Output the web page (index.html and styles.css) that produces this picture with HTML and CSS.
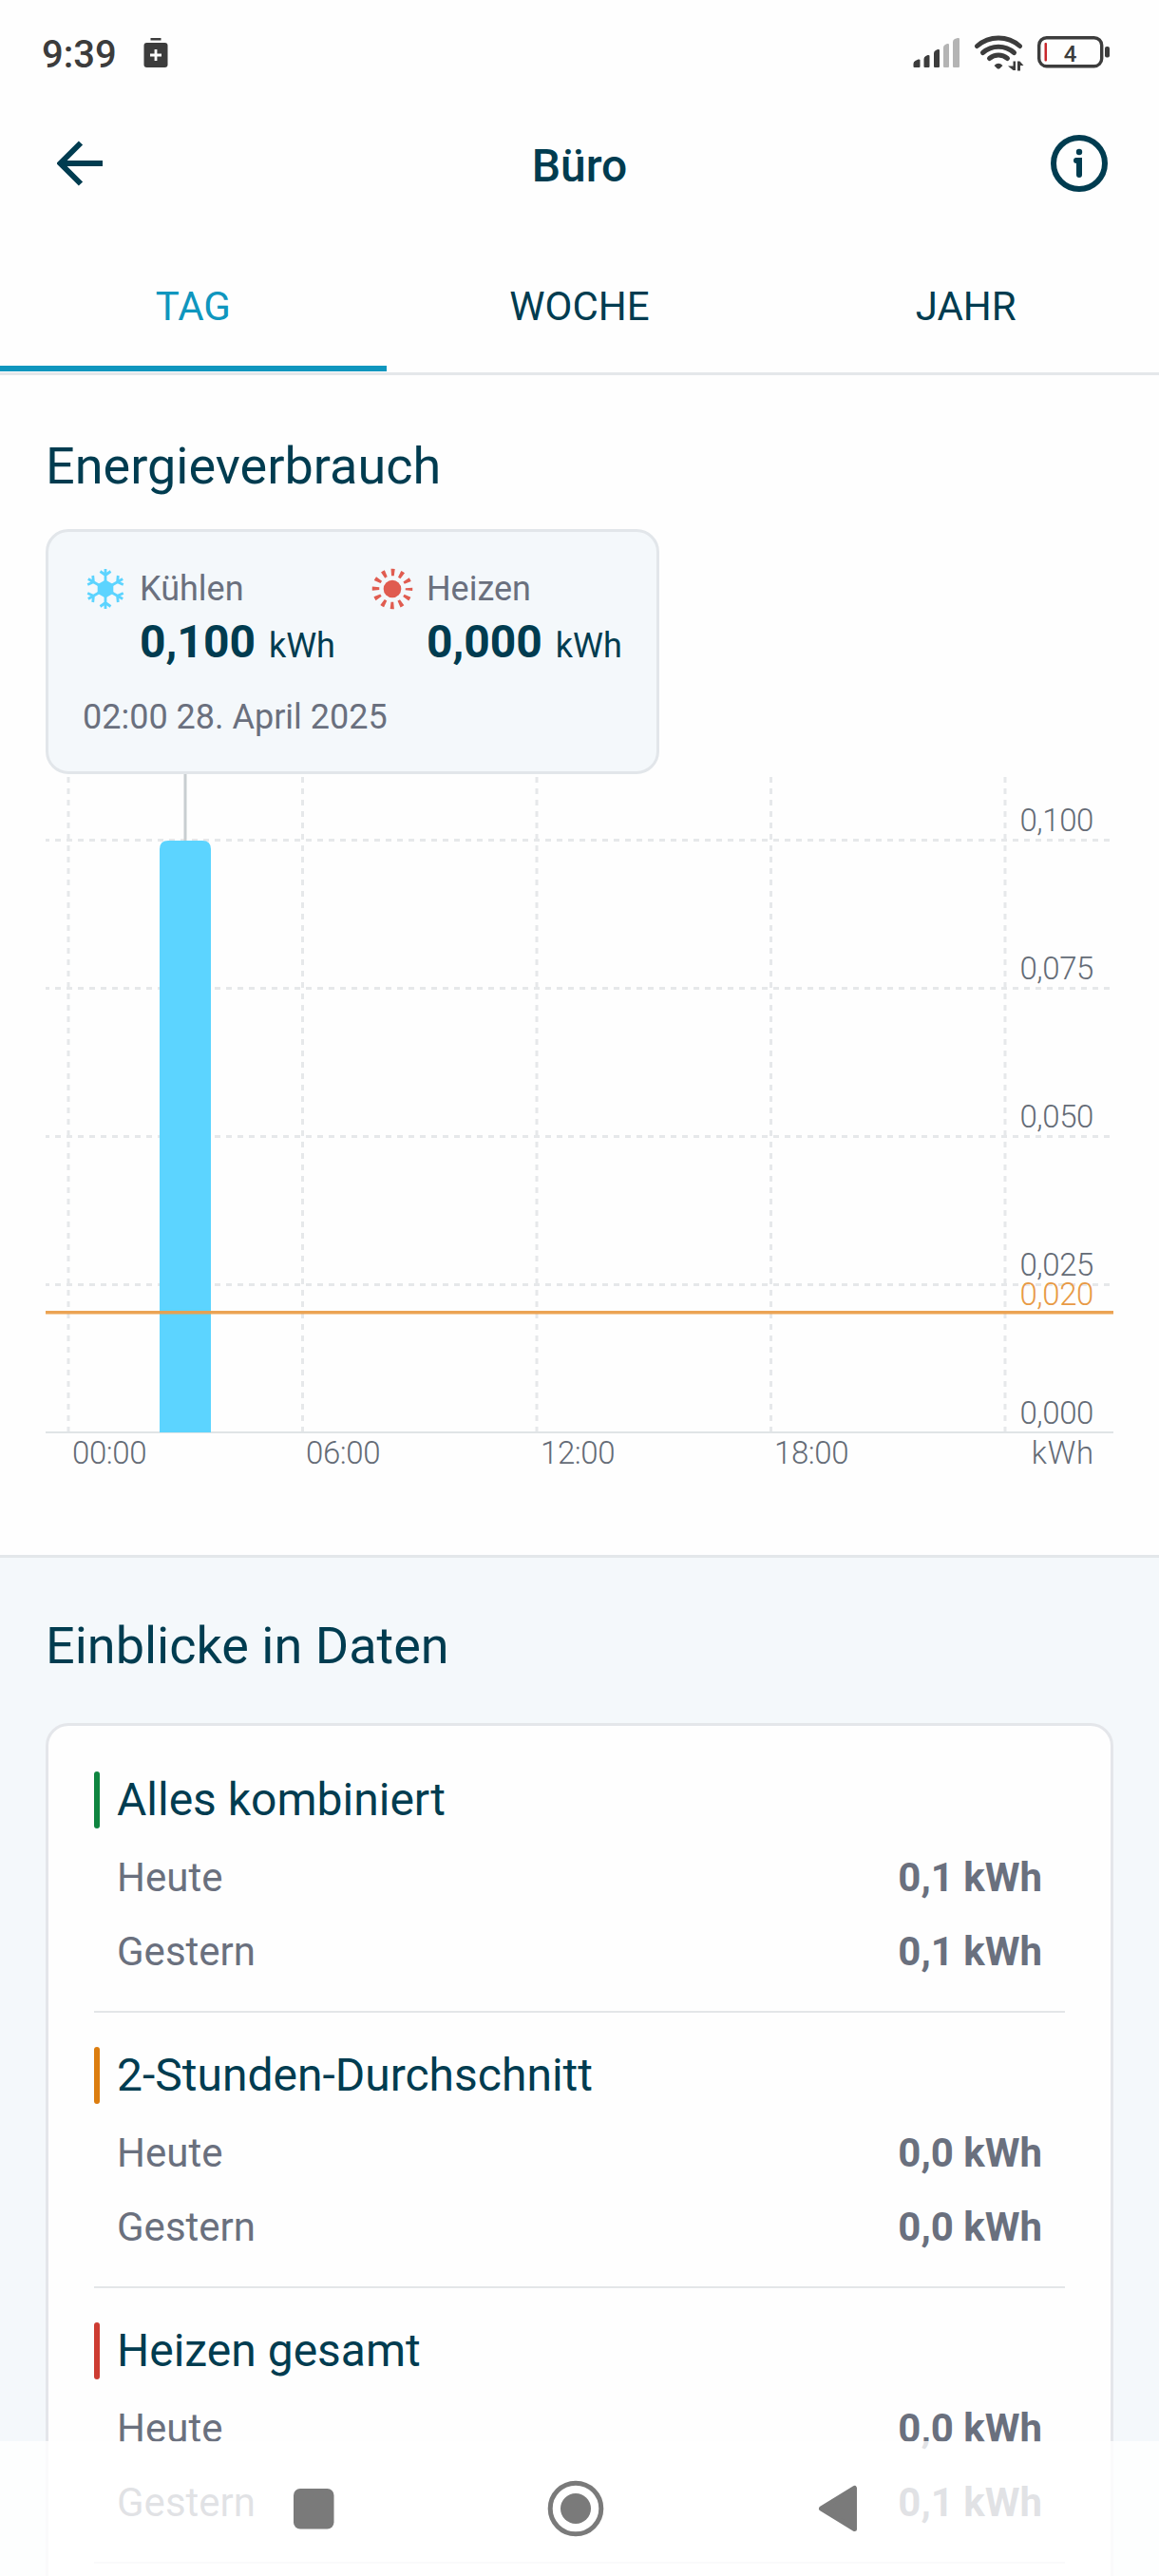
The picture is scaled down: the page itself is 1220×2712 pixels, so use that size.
FILE: index.html
```html
<!DOCTYPE html>
<html lang="de">
  <head>
    <meta charset="UTF-8" />
    <meta name="viewport" content="width=device-width, initial-scale=1.0" />
    <title>Büro - Energieverbrauch</title>
    <link rel="stylesheet" href="styles.css">
  </head>
  <body>
    <!-- Status Bar -->
    <div class="status-bar">
      <div class="status-left">
        <span class="clock">9:39</span>
        <svg class="saver-icon" width="26" height="32" viewBox="0 0 26 32">
          <rect x="7.500" y="0" width="11" height="2.500" fill="#3c3c3c"/>
          <rect x="0.500" y="5" width="25" height="26" rx="3" fill="#3c3c3c"/>
          <path d="M13 12v12M7 18h12" stroke="#fefefe" stroke-width="2.800"/>
        </svg>
      </div>
      <div class="status-right">
        <svg width="50" height="40" viewBox="0 0 50 40">
          <g fill="#3c3c3c">
            <path d="M0.500 35v-3q0-2 2-3l3-1.500q2-.5 2 1V35q0 1-1 1h-5q-1 0-1-1z"/>
            <path d="M11.500 35v-8q0-2 2-3l2-1q2-.5 2 1V35q0 1-1 1h-4q-1 0-1-1z"/>
            <path d="M22 35V21q0-2 2-3l2-1q2-.5 2 1V35q0 1-1 1h-4q-1 0-1-1z"/>
          </g>
          <g fill="#b4b4b4">
            <path d="M32 35V15q0-2 2-3l2-1q2-.5 2 1V35q0 1-1 1h-4q-1 0-1-1z"/>
            <path d="M42 35V9q0-2 2-3l3-1q2-.5 2 1V35q0 1-1 1h-5q-1 0-1-1z"/>
          </g>
        </svg>
        <svg width="54" height="40" viewBox="0 0 54 40">
          <g fill="none" stroke="#3c3c3c" stroke-width="5" stroke-linecap="round">
            <path d="M3.500 13.500a34 34 0 0 1 45 0"/>
            <path d="M9.500 20.500a25 25 0 0 1 33 0"/>
            <path d="M16.500 26.500a15 15 0 0 1 19 0"/>
          </g>
          <path d="M21.500 34q4.500-4.500 9 0l-3 3q-1.500 1.200-3 0z" fill="#3c3c3c"/>
          <path d="M41.500 29.500h2.500v9.500h-2.500l-5.500-4.500h5.500zM46 39.500v-10h2.500l4 4.500h-3.500v5.500z" fill="#3c3c3c"/>
        </svg>
        <svg width="77" height="34" viewBox="0 0 77 34">
          <rect x="1.700" y="1.700" width="66" height="30" rx="8" fill="none" stroke="#3c3c3c" stroke-width="3.400"/>
          <rect x="71" y="11" width="5" height="11.500" rx="2" fill="#3c3c3c"/>
          <rect x="7.500" y="7" width="2.500" height="19.500" rx="1" fill="#c8282d"/>
          <text x="34.500" y="26.500" text-anchor="middle" class="battery-level">4</text>
        </svg>
      </div>
    </div>

    <!-- Header -->
    <div class="header">
      <svg class="back-icon" width="48" height="48" viewBox="0 0 48 48">
        <path d="M25 2.500L3.500 24L25 45.500M4 24H48" fill="none" stroke="#003c50" stroke-width="6"/>
      </svg>
      <h1>Büro</h1>
      <svg class="info-icon" width="60" height="60" viewBox="0 0 60 60">
        <circle cx="30" cy="30" r="27" fill="none" stroke="#003c50" stroke-width="6"/>
        <circle cx="30" cy="18" r="3.200" fill="#003c50"/>
        <path d="M27 27h3v15" fill="none" stroke="#003c50" stroke-width="6" stroke-linecap="round"/>
        <path d="M26 24h7v4h-7z" fill="#003c50"/>
      </svg>
    </div>

    <!-- Tabs -->
    <div class="tabs">
      <a href="#" class="tab active">TAG</a>
      <a href="#" class="tab">WOCHE</a>
      <a href="#" class="tab">JAHR</a>
    </div>

    <!-- Energy Chart -->
    <div class="usage">
      <h2>Energieverbrauch</h2>

      <div class="chart-info">
        <div class="info-values">
          <div class="info-item">
            <svg width="48" height="48" viewBox="0 0 48 48">
              <defs>
                <g id="flake-arm">
                  <path d="M24 24V3M18.500 5.500L24 9.500L29.500 5.500"/>
                </g>
              </defs>
              <g fill="none" stroke="#5cd4ff" stroke-width="2.800">
                <use href="#flake-arm"/>
                <use href="#flake-arm" transform="rotate(60 24 24)"/>
                <use href="#flake-arm" transform="rotate(120 24 24)"/>
                <use href="#flake-arm" transform="rotate(180 24 24)"/>
                <use href="#flake-arm" transform="rotate(240 24 24)"/>
                <use href="#flake-arm" transform="rotate(300 24 24)"/>
              </g>
              <path d="M24 14.500l8.300 4.700v9.600L24 33.500l-8.300-4.700v-9.600z" fill="#5cd4ff"/>
            </svg>
            <div>
              <div class="info-label">Kühlen</div>
              <div class="info-value">0,100 <span>kWh</span></div>
            </div>
          </div>
          <div class="info-item">
            <svg width="48" height="48" viewBox="0 0 48 48">
              <circle cx="24" cy="24" r="9.300" fill="#e05c50"/>
              <circle cx="24" cy="24" r="17.500" fill="none" stroke="#e05c50" stroke-width="7.500" stroke-dasharray="3.600 5.563" stroke-dashoffset="1.800"/>
            </svg>
            <div>
              <div class="info-label">Heizen</div>
              <div class="info-value">0,000 <span>kWh</span></div>
            </div>
          </div>
        </div>
        <div class="info-date">02:00 28. April 2025</div>
      </div>

      <svg class="chart" width="1124" height="760" viewBox="0 0 1124 760">
        <g class="grid">
          <path d="M24 3V693M270.500 3V693M517 3V693M763.500 3V693M1010 3V693"/>
          <path d="M-2 69.500H1124M-2 225.500H1124M-2 381.500H1124M-2 537.500H1124"/>
        </g>
        <path class="axis" d="M0 693H1124"/>
        <path class="marker" d="M147 0V70"/>
        <path class="bar" d="M120 693V79q0-9 9-9h36q9 0 9 9V693z"/>
        <path class="average" d="M0 566.800H1124"/>
        <g class="labels-y">
          <text x="1103" y="60">0,100</text>
          <text x="1103" y="216">0,075</text>
          <text x="1103" y="372">0,050</text>
          <text x="1103" y="528">0,025</text>
          <text x="1103" y="559" class="average-label">0,020</text>
          <text x="1103" y="684">0,000</text>
          <text x="1104" y="726" class="unit">kWh</text>
        </g>
        <g class="labels-x">
          <text x="28" y="726">00:00</text>
          <text x="274" y="726">06:00</text>
          <text x="521" y="726">12:00</text>
          <text x="767" y="726">18:00</text>
        </g>
      </svg>
    </div>

    <!-- Insights -->
    <div class="insights">
      <h2>Einblicke in Daten</h2>
      <div class="card">
        <div class="entry green">
          <h3>Alles kombiniert</h3>
          <div class="row"><span>Heute</span><b>0,1 kWh</b></div>
          <div class="row"><span>Gestern</span><b>0,1 kWh</b></div>
        </div>
        <div class="entry orange">
          <h3>2-Stunden-Durchschnitt</h3>
          <div class="row"><span>Heute</span><b>0,0 kWh</b></div>
          <div class="row"><span>Gestern</span><b>0,0 kWh</b></div>
        </div>
        <div class="entry red">
          <h3>Heizen gesamt</h3>
          <div class="row"><span>Heute</span><b>0,0 kWh</b></div>
          <div class="row"><span>Gestern</span><b>0,1 kWh</b></div>
        </div>
      </div>
    </div>

    <!-- Navigation Bar -->
    <div class="nav-bar">
      <svg width="60" height="60" viewBox="0 0 60 60">
        <rect x="9" y="9" width="42.500" height="42.500" rx="7" fill="#7a7a7a"/>
      </svg>
      <svg width="60" height="60" viewBox="0 0 60 60">
        <circle cx="30" cy="30" r="26.800" fill="none" stroke="#7a7a7a" stroke-width="5"/>
        <circle cx="30" cy="30" r="16" fill="#7a7a7a"/>
      </svg>
      <svg width="60" height="60" viewBox="0 0 60 60">
        <path d="M12.500 30L47.500 8.500V51.500z" fill="#7a7a7a" stroke="#7a7a7a" stroke-width="5" stroke-linejoin="round"/>
      </svg>
    </div>
  </body>
</html>
```
FILE: styles.css
```css
* {
  margin: 0;
  padding: 0;
  box-sizing: border-box;
}

body {
  background-color: #fefefe;
  height: 2712px;
  color: #003c50;
  font-family: Roboto, "Liberation Sans", sans-serif;
  position: relative;
  overflow: hidden;
}

svg {
  display: block;
  flex-shrink: 0;
}

/* Status Bar */
.status-bar {
  height: 115px;
  padding: 0 51px 0 44px;
  display: flex;
  justify-content: space-between;
  align-items: center;
}

.status-left,
.status-right {
  display: flex;
  align-items: center;
}

.clock {
  font-size: 40px;
  font-weight: 500;
  color: #3c3c3c;
  width: 107px;
}

.saver-icon {
  margin-bottom: 4px;
}

.status-right {
  margin-bottom: 6px;
  gap: 14px;
}

.status-right svg:nth-child(2) {
  margin-right: -1px;
}

.battery-level {
  font-size: 24px;
  font-weight: 500;
  fill: #3c3c3c;
}

/* Header */
.header {
  height: 114px;
  padding: 0 54px 0 60px;
  display: grid;
  grid-template-columns: 60px 1fr 60px;
  align-items: center;
}

.header h1 {
  font-size: 48px;
  font-weight: 500;
  text-align: center;
  padding: 4px 6px 0 0;
}

/* Tabs */
.tabs {
  height: 166px;
  display: flex;
  border-bottom: 3px solid #e4e7ea;
}

.tab {
  flex: 1;
  height: 162px;
  padding-top: 69px;
  font-size: 42px;
  line-height: 50px;
  text-align: center;
  text-decoration: none;
  color: #003c50;
}

.tab.active {
  color: #0f96be;
  border-bottom: 6px solid #0f96be;
}

h2 {
  font-size: 54px;
  font-weight: 400;
  line-height: 64px;
}

/* Energy Chart */
.usage {
  height: 1245px;
  padding: 64px 48px 0;
  border-bottom: 3px solid #e3e7ea;
}

.chart-info {
  width: fit-content;
  height: 258px;
  margin-top: 34px;
  padding: 36px;
  background: #f4f8fb;
  border: 3px solid #e2e6ea;
  border-radius: 24px;
}

.info-values {
  display: flex;
  gap: 36px;
}

.info-item {
  display: flex;
  gap: 12px;
}

.info-label {
  font-size: 36px;
  line-height: 48px;
  color: #6a707e;
}

.info-value {
  font-size: 48px;
  font-weight: 700;
  line-height: 64px;
}

.info-value span {
  margin-left: 2px;
  font-size: 36px;
  font-weight: 400;
}

.info-date {
  margin-top: 21px;
  font-size: 36px;
  line-height: 44px;
  color: #6a707e;
}

.grid path {
  stroke: #e6e8ea;
  stroke-width: 3;
  stroke-dasharray: 6 6;
}

.axis {
  stroke: #e0e4e6;
  stroke-width: 2;
}

.marker {
  stroke: #c8ced1;
  stroke-width: 3;
}

.bar {
  fill: #5cd4ff;
}

.average {
  stroke: #eb9f4b;
  stroke-width: 3.500;
  opacity: 0.95;
}

.chart text {
  font-size: 33px;
  font-weight: 300;
  letter-spacing: -0.400px;
  fill: #646b76;
}

.labels-y text {
  text-anchor: end;
}

.chart .average-label {
  fill: #e89a45;
}

.chart .unit {
  letter-spacing: 0.800px;
}

/* Insights */
.insights {
  height: 1072px;
  padding: 61px 48px 0;
  background: #f4f8fb;
}

.card {
  height: 960px;
  margin-top: 49px;
  padding: 12px 48px 0;
  background: #fefefe;
  border: 3px solid #e4e6ea;
  border-radius: 24px;
}

.entry {
  padding: 36px 0;
  border-bottom: 2px solid #e3e6e8;
}

.entry h3 {
  font-size: 48px;
  font-weight: 400;
  line-height: 60px;
  display: flex;
  gap: 18px;
}

.entry h3::before {
  content: "";
  width: 6px;
  border-radius: 3px;
}

.green h3::before {
  background: #0f8540;
}

.orange h3::before {
  background: #dc7d0f;
}

.red h3::before {
  background: #cd3c32;
}

.row {
  display: flex;
  justify-content: space-between;
  padding: 26px 24px 0;
  font-size: 42px;
  line-height: 52px;
  color: #6a707e;
}

/* Navigation Bar */
.nav-bar {
  position: absolute;
  left: 0;
  right: 0;
  bottom: 0;
  height: 142px;
  padding: 0 308px 0 300px;
  display: flex;
  justify-content: space-between;
  align-items: center;
  background: rgba(255, 255, 255, 0.8);
}
```
